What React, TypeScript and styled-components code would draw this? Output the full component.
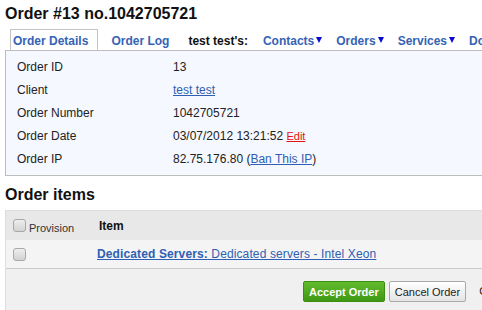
import styled, { createGlobalStyle } from "styled-components";

const GlobalStyle = createGlobalStyle`
  html, body {
    margin: 0;
    padding: 0;
    overflow: hidden;
    background: #ffffff;
  }
  body {
    font-family: "Liberation Sans", Arial, sans-serif;
    font-size: 12px;
    color: #222222;
  }
`;

interface IDetail {
  label: string;
  value: React.ReactNode;
}

const App = () => {
  const details: Array<IDetail> = [
    { label: "Order ID", value: "13" },
    { label: "Client", value: <Link href="#">test test</Link> },
    { label: "Order Number", value: "1042705721" },
    {
      label: "Order Date",
      value: (
        <>
          03/07/2012 13:21:52 <EditLink href="#">Edit</EditLink>
        </>
      ),
    },
    {
      label: "Order IP",
      value: (
        <>
          82.75.176.80 (<Link href="#">Ban This IP</Link>)
        </>
      ),
    },
  ];

  return (
    <Page>
      <GlobalStyle />
      <Title>Order #13 no.1042705721</Title>

      <Tabs>
        <Tab $active>Order Details</Tab>
        <Tab>Order Log</Tab>
        <TabLabel>test test's:</TabLabel>
        <Tab>
          Contacts<Arrow />
        </Tab>
        <Tab>
          Orders<Arrow />
        </Tab>
        <Tab>
          Services<Arrow />
        </Tab>
        <Tab>Domains</Tab>
      </Tabs>

      <DetailsPanel>
        <DetailsTable>
          <tbody>
            {details.map((d) => (
              <DetailRow key={d.label}>
                <LabelCell>{d.label}</LabelCell>
                <ValueCell>{d.value}</ValueCell>
              </DetailRow>
            ))}
          </tbody>
        </DetailsTable>
      </DetailsPanel>

      <Subtitle>Order items</Subtitle>

      <Items>
        <HeaderRow>
          <CheckCell>
            <Check type="checkbox" />
            <Small>Provision</Small>
          </CheckCell>
          <ItemHead>Item</ItemHead>
        </HeaderRow>
        <ItemRow>
          <CheckCell>
            <Check type="checkbox" />
          </CheckCell>
          <ItemCell>
            <Link href="#">
              <b>Dedicated Servers:</b> Dedicated servers - Intel Xeon
            </Link>
          </ItemCell>
        </ItemRow>
        <Footer>
          <Button $primary>Accept Order</Button>
          <Button>Cancel Order</Button>
          <FooterText>Cancel Order &amp; Refund</FooterText>
        </Footer>
      </Items>
    </Page>
  );
};

const Page = styled.div`
  width: 640px;
  padding-left: 5px;
  height: 310px;
  overflow: hidden;
`;

const Title = styled.h1`
  margin: 4px 0 5px;
  font-size: 16px;
  line-height: 20px;
  font-weight: bold;
  color: #111;
`;

const Tabs = styled.div`
  display: flex;
  align-items: stretch;
  height: 21px;
  padding-left: 5px;
`;

const Tab = styled.div<{ $active?: boolean }>`
  display: flex;
  align-items: center;
  padding: ${(p) => (p.$active ? "2px 9px 0 2px" : "2px 7px 0")};
  margin-right: ${(p) => (p.$active ? "6px" : "0")};
  font-size: 12px;
  font-weight: bold;
  color: #3563b5;
  background: ${(p) => (p.$active ? "#ffffff" : "transparent")};
  border: ${(p) => (p.$active ? "1px solid #c4c4c4" : "none")};
  border-bottom: none;
  white-space: nowrap;
`;

const TabLabel = styled.div`
  display: flex;
  align-items: center;
  padding: 2px 8px 0 12px;
  font-size: 12px;
  font-weight: bold;
  color: #111;
  white-space: nowrap;
`;

const Arrow = styled.span`
  display: inline-block;
  margin-left: 2px;
  margin-top: -2px;
  width: 0;
  height: 0;
  border-left: 3.5px solid transparent;
  border-right: 3.5px solid transparent;
  border-top: 6px solid #0a0ad0;
`;

const DetailsPanel = styled.div`
  border: 1px solid #bdbdbd;
  background: #f5f8fe;
  padding: 4px 0 5px 11px;
`;

const DetailsTable = styled.table`
  border-collapse: collapse;
`;

const DetailRow = styled.tr`
  height: 23px;
`;

const LabelCell = styled.td`
  width: 156px;
  padding: 0;
  vertical-align: middle;
`;

const ValueCell = styled.td`
  padding: 0;
  vertical-align: middle;
  white-space: nowrap;
`;

const Link = styled.a`
  color: #2f5fb3;
  text-decoration: underline;
`;

const EditLink = styled.a`
  color: #e81010;
  font-size: 11px;
  text-decoration: underline;
`;

const Subtitle = styled.h2`
  margin: 9px 0 5px;
  font-size: 16px;
  line-height: 20px;
  font-weight: bold;
  color: #111;
`;

const Items = styled.div`
  border-left: 1px solid #dddddd;
  border-top: 1px solid #dddddd;
  background: #f0f0f0;
`;

const HeaderRow = styled.div`
  display: flex;
  align-items: center;
  height: 29px;
  background: #e8e8e8;
`;

const ItemRow = styled.div`
  display: flex;
  align-items: center;
  height: 28px;
  background: #f4f4f4;
  border-bottom: 1px solid #cccccc;
`;

const CheckCell = styled.div`
  display: flex;
  align-items: center;
  width: 78px;
  padding-left: 7px;
`;

const Check = styled.input`
  appearance: none;
  margin: 0;
  width: 13px;
  height: 13px;
  border: 1px solid #a8a8a8;
  border-radius: 3px;
  background: linear-gradient(#eeeeee, #d2d2d2);
  box-sizing: border-box;
`;

const Small = styled.span`
  margin-left: 3px;
  margin-top: 4px;
  font-size: 11px;
  color: #333;
`;

const ItemHead = styled.div`
  padding-left: 8px;
  font-size: 12px;
  font-weight: bold;
  color: #111;
`;

const ItemCell = styled.div`
  padding-left: 6px;
  font-size: 12px;
  letter-spacing: 0.01em;
  white-space: nowrap;
`;

const Footer = styled.div`
  display: flex;
  align-items: flex-start;
  gap: 4px;
  padding: 12px 0 0 297px;
  height: 40px;
`;

const Button = styled.button<{ $primary?: boolean }>`
  height: 21px;
  padding: 0 5px;
  margin: 0;
  font-family: "Liberation Sans", Arial, sans-serif;
  font-size: 11px;
  font-weight: ${(p) => (p.$primary ? "bold" : "normal")};
  color: ${(p) => (p.$primary ? "#ffffff" : "#222222")};
  background: ${(p) =>
    p.$primary
      ? "linear-gradient(#62bb2d, #3f9813)"
      : "linear-gradient(#ffffff, #e4e4e4)"};
  border: 1px solid ${(p) => (p.$primary ? "#3c8d12" : "#a9a9a9")};
  border-radius: 2px;
  white-space: nowrap;
`;

const FooterText = styled.span`
  margin-left: 9px;
  margin-top: 4px;
  font-size: 11px;
  color: #222;
  white-space: nowrap;
`;

export default App;
